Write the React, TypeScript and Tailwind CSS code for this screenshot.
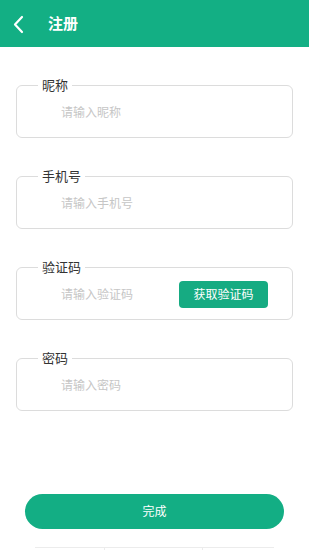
import React from "react";

const fields = [
  { label: "昵称", placeholder: "请输入昵称" },
  { label: "手机号", placeholder: "请输入手机号" },
  { label: "验证码", placeholder: "请输入验证码", code: true },
  { label: "密码", placeholder: "请输入密码" },
];

function Field({ label, placeholder, code }: { label: string; placeholder: string; code?: boolean }) {
  return (
    <fieldset className="mx-4 rounded-md border border-[#dcdcdc] pb-[5px]">
      <legend className="ml-[21px] px-1 text-[13px] leading-4 text-[#333]">{label}</legend>
      <div className="flex h-[39px] items-center pl-[44px] pr-6">
        <span className="flex-1 text-[12px] text-[#c6c6c6]">{placeholder}</span>
        {code && (
          <button className="h-[27px] w-[89px] rounded-[4px] bg-[#16ab82] text-[12px] text-white">
            获取验证码
          </button>
        )}
      </div>
    </fieldset>
  );
}

export default function App() {
  return (
    <div
      className="flex min-h-[550px] w-full flex-col overflow-hidden bg-white"
      style={{ fontFamily: '"Noto Sans", "Noto Sans CJK SC", sans-serif' }}
    >
      {/* 顶部栏 */}
      <header className="flex h-[47px] items-center bg-[#13af84]">
        <svg width="40" height="47" viewBox="0 0 40 47" className="shrink-0">
          <path d="M22 17 L15 24.5 L22 32" fill="none" stroke="white" strokeWidth="2.2" strokeLinecap="round" strokeLinejoin="round" />
        </svg>
        <h1 className="ml-2 text-[15px] font-bold text-white">注册</h1>
      </header>

      {/* 表单 */}
      <div className="mt-[30px] flex flex-col gap-[30px]">
        {fields.map((f) => (
          <Field key={f.label} {...f} />
        ))}
      </div>

      <button className="mx-[25px] mt-[83px] h-[35px] shrink-0 rounded-full bg-[#13ae84] text-[12px] text-white">
        完成
      </button>

      <div className="mx-[35px] mt-[18px] grid h-5 shrink-0 grid-cols-[70px_98px_1fr] border-t border-[#ececec]">
        <div className="border-r border-[#ececec]" />
        <div className="border-r border-[#ececec]" />
        <div />
      </div>
    </div>
  );
}
